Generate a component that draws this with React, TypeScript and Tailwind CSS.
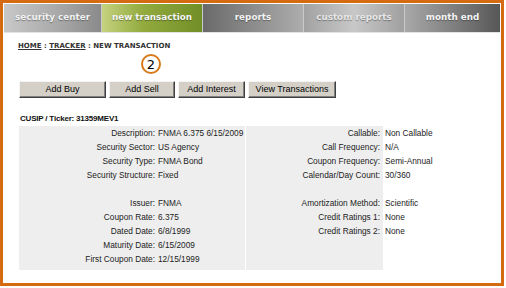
const tabs = [
  { label: "security center", w: "w-[97px]", bg: "bg-[linear-gradient(90deg,#c8c8c8,#a6a6a6_60%,#8a8a8a)]", text: "text-[#f2f2f2]" },
  { label: "new transaction", w: "w-[101px]", bg: "bg-[linear-gradient(90deg,#c6d27f,#93ab3f_40%,#718f27)]", text: "text-[#f4f4f4]" },
  { label: "reports", w: "w-[101px]", bg: "bg-[linear-gradient(90deg,#6a6a6a,#8c8c8c_50%,#adadad)]", text: "text-[#f2f2f2]" },
  { label: "custom reports", w: "w-[101px]", bg: "bg-[linear-gradient(90deg,#a2a2a2,#c8c8c8_50%,#a0a0a0)]", text: "text-[#e6e6e6]" },
  { label: "month end", w: "flex-1", bg: "bg-[linear-gradient(90deg,#a8a8a8,#808080_50%,#575757)]", text: "text-[#f4f4f4]" },
]

const buttons = [
  { label: "Add Buy", w: "w-[87px]" },
  { label: "Add Sell", w: "w-[66px]" },
  { label: "Add Interest", w: "w-[67px]" },
  { label: "View Transactions", w: "w-[88px]" },
]

const rows: [string, string, string, string][] = [
  ["Description:", "FNMA 6.375 6/15/2009", "Callable:", "Non Callable"],
  ["Security Sector:", "US Agency", "Call Frequency:", "N/A"],
  ["Security Type:", "FNMA Bond", "Coupon Frequency:", "Semi-Annual"],
  ["Security Structure:", "Fixed", "Calendar/Day Count:", "30/360"],
  ["", "", "", ""],
  ["Issuer:", "FNMA", "Amortization Method:", "Scientific"],
  ["Coupon Rate:", "6.375", "Credit Ratings 1:", "None"],
  ["Dated Date:", "6/8/1999", "Credit Ratings 2:", "None"],
  ["Maturity Date:", "6/15/2009", "", ""],
  ["First Coupon Date:", "12/15/1999", "", ""],
]

function NavBar() {
  return (
    <div className="flex h-[29px] border-b border-[#e2e2e2]">
      {tabs.map((t, i) => (
        <div
          key={t.label}
          className={`${t.w} ${t.bg} ${i > 0 ? "border-l border-[#c9c9c9]" : ""} flex items-center justify-center`}
        >
          <span
            className={`font-['DejaVu_Sans',sans-serif] font-bold text-[8.8px] ${t.text} [text-shadow:0_1px_1px_rgba(0,0,0,0.35)]`}
          >
            {t.label}
          </span>
        </div>
      ))}
    </div>
  )
}

function DetailTable() {
  return (
    <div className="ml-[1px] mt-[2px] grid grid-cols-[137px_89px_138px_1fr] font-['Liberation_Sans',Arial,sans-serif] text-[8.3px] text-[#222]">
      {rows.map((r, i) => (
        <div key={i} className="contents">
          <div className="h-[14px] leading-[14px] bg-[#eeeeee] text-right pr-[1px] whitespace-nowrap">{r[0]}</div>
          <div className="h-[14px] leading-[14px] bg-[#eeeeee] pl-[2px] whitespace-nowrap">{r[1]}</div>
          <div className="h-[14px] leading-[14px] bg-[#eeeeee] border-l border-white text-right pr-[3px] whitespace-nowrap">{r[2]}</div>
          <div className="h-[14px] leading-[14px] pl-[2px] whitespace-nowrap">{r[3]}</div>
        </div>
      ))}
      <div className="h-[4px] bg-[#eeeeee]" />
      <div className="h-[4px] bg-[#eeeeee]" />
      <div className="h-[4px] bg-[#eeeeee] border-l border-white" />
      <div className="h-[4px]" />
    </div>
  )
}

export default function App() {
  return (
    <div className="w-[506px] h-[288px] bg-white">
      <div className="w-[504px] h-[286px] border-[3px] border-[#d46b12] p-[1px] flex flex-col">
        <NavBar />
        <div className="pl-[14px] flex flex-col">
          <div className="mt-[8px] h-[10px] leading-[10px] font-['DejaVu_Sans',sans-serif] font-bold text-[7px] text-[#333]">
            <span className="underline">HOME</span> : <span className="underline">TRACKER</span> : NEW TRANSACTION
          </div>
          <div className="mt-[3px] ml-[123px] w-[20px] h-[20px] rounded-full border-2 border-[#d97a1a] flex items-center justify-center font-['DejaVu_Sans',sans-serif] text-[13px] leading-none text-black">
            2
          </div>
          <div className="mt-[7px] ml-[1px] flex gap-[3px]">
            {buttons.map((b) => (
              <div
                key={b.label}
                className={`${b.w} h-[17px] bg-[#d4d0c8] border border-t-[#f4f4f4] border-l-[#f4f4f4] border-r-[#404040] border-b-[#404040] shadow-[inset_-1px_-1px_0_#808080] flex items-center justify-center font-['Liberation_Sans',Arial,sans-serif] text-[9px] text-black`}
              >
                {b.label}
              </div>
            ))}
          </div>
          <div className="mt-[16px] ml-[2px] h-[10px] leading-[10px] font-['Liberation_Sans',Arial,sans-serif] font-bold text-[8px] tracking-[-0.2px] text-[#111]">
            CUSIP / Ticker: 31359MEV1
          </div>
          <DetailTable />
        </div>
      </div>
    </div>
  )
}
